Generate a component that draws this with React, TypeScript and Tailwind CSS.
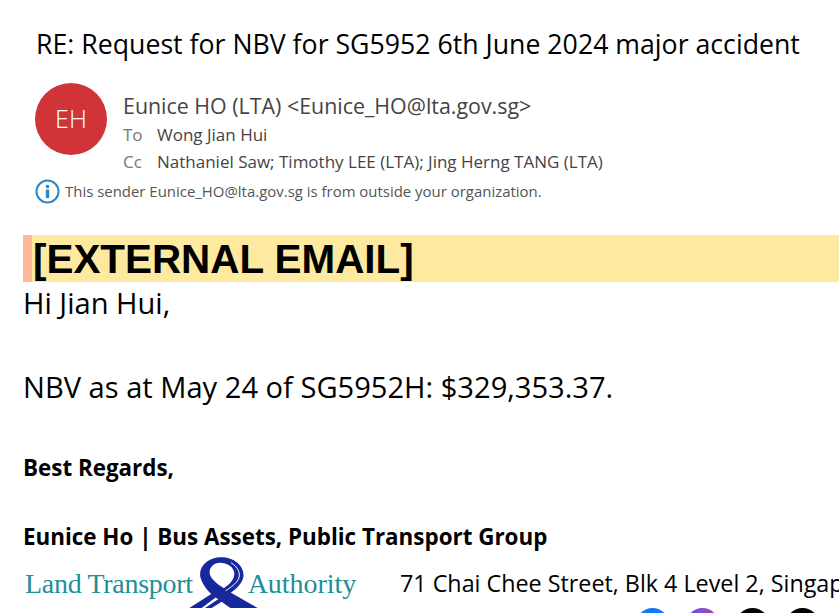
const sans = { fontFamily: '"Open Sans", "Noto Sans", sans-serif' };

function InfoIcon() {
  return (
    <svg width="25" height="25" viewBox="0 0 25 25" className="shrink-0">
      <circle cx="12.5" cy="12.5" r="11" fill="none" stroke="#2b88c4" strokeWidth="2" />
      <circle cx="12.5" cy="7.5" r="1.8" fill="#2b88c4" />
      <rect x="10.8" y="10.5" width="3.4" height="8.5" fill="#2b88c4" />
    </svg>
  );
}

function LtaLogo() {
  return (
    <div className="flex items-start w-[334px] h-[56px] shrink-0 pl-[2px]">
      <span className="font-['Liberation_Serif',serif] text-[28px] leading-[28px] tracking-[-0.3px] text-[#1f8e96] mt-[18px] whitespace-nowrap">Land Transport</span>
      <svg width="85" height="60" viewBox="0 0 255 180" className="shrink-0 -ml-[12px]">
        <path d="M58 75 C53 40 85 16 120 16 C162 16 192 45 187 75 C184 95 165 112 142 127 L122 112 C146 98 160 82 160 65 C160 45 138 32 117 32 C98 32 84 46 86 64 C89 84 112 98 142 118 L230 168 L148 168 L98 132 C78 117 63 95 58 75 Z" fill="#17289a" />
        <path d="M150 32 C172 46 180 65 172 82 C166 94 150 106 134 116" fill="none" stroke="#fff" strokeWidth="3" />
        <path d="M25 168 L106 116 L118 126 L62 168 Z M72 168 L126 132 L136 140 L92 168 Z" fill="#17289a" />
      </svg>
      <span className="font-['Liberation_Serif',serif] text-[28px] leading-[28px] tracking-[-0.05px] text-[#1f8e96] mt-[18px] -ml-[18px] whitespace-nowrap">Authority</span>
    </div>
  );
}

function SocialDots() {
  return (
    <div className="flex gap-[17px] ml-[613px] w-[260px]">
      <div className="w-[33px] h-[33px] rounded-full shrink-0 bg-[#1877f2]" />
      <div className="w-[33px] h-[33px] rounded-full shrink-0 bg-gradient-to-r from-[#4f55d8] to-[#b53ab0]" />
      <div className="w-[33px] h-[33px] rounded-full shrink-0 bg-black" />
      <div className="w-[33px] h-[33px] rounded-full shrink-0 bg-black" />
      <div className="w-[33px] h-[33px] rounded-full shrink-0 bg-[#19a7ce]" />
    </div>
  );
}

export default function App() {
  return (
    <div className="w-[839px] h-[613px] overflow-hidden bg-white" style={sans}>
      {/* Header */}
      <div className="pl-[36px] pt-[26px]">
        <h1 className="text-[26.7px] leading-[36px] text-black whitespace-nowrap">RE: Request for NBV for SG5952 6th June 2024 major accident</h1>
      </div>
      <div className="flex pl-[35px] mt-[21px]">
        <div className="w-[72px] h-[72px] rounded-full bg-[#d13438] flex items-center justify-center text-white text-[25px] font-light shrink-0">EH</div>
        <div className="ml-[16px] text-[#444] pt-[7px]">
          <div className="text-[21.4px] leading-[32px] pb-[1px] -mb-[2px] whitespace-nowrap">Eunice HO (LTA) &lt;Eunice_HO@lta.gov.sg&gt;</div>
          <div className="flex text-[17px] leading-[27px] whitespace-nowrap">
            <span className="w-[34px] text-[#777]">To</span>
            <span>Wong Jian Hui</span>
          </div>
          <div className="flex text-[17px] leading-[27px] whitespace-nowrap">
            <span className="w-[34px] text-[#777]">Cc</span>
            <span>Nathaniel Saw; Timothy LEE (LTA); Jing Herng TANG (LTA)</span>
          </div>
        </div>
      </div>
      <div className="flex items-center pl-[35px] mt-[3px] h-[26px] text-[14.95px] text-[#555] whitespace-nowrap">
        <InfoIcon />
        <span className="ml-[5px]">This sender Eunice_HO@lta.gov.sg is from outside your organization.</span>
      </div>

      {/* External banner */}
      <div className="mt-[31px] ml-[23px] h-[47px] flex bg-[#fde99f]">
        <div className="w-[9px] bg-[#fdb89a] shrink-0" />
        <span className="font-['Liberation_Sans',sans-serif] font-bold text-[40.4px] leading-[47px] pt-[1px] text-black whitespace-nowrap pl-[1px]">[EXTERNAL EMAIL]</span>
      </div>

      {/* Body */}
      <div className="pl-[23px] text-black whitespace-nowrap">
        <p className="text-[29.1px] leading-[42px]">Hi Jian Hui,</p>
        <p className="text-[29.1px] leading-[42px] mt-[42px]">NBV as at May 24 of SG5952H: $329,353.37.</p>
        <p className="text-[22.4px] font-bold leading-[34px] mt-[43px]">Best Regards,</p>
        <p className="text-[22.4px] font-bold leading-[34px] mt-[35px]">Eunice Ho | Bus Assets, Public Transport Group</p>
        <div className="flex items-start -mt-[2px]">
          <LtaLogo />
          <span className="text-[23.3px] leading-[34px] ml-[43px] mt-[14px]">71 Chai Chee Street, Blk 4 Level 2, Singapore</span>
        </div>
        <SocialDots />
      </div>
    </div>
  );
}
